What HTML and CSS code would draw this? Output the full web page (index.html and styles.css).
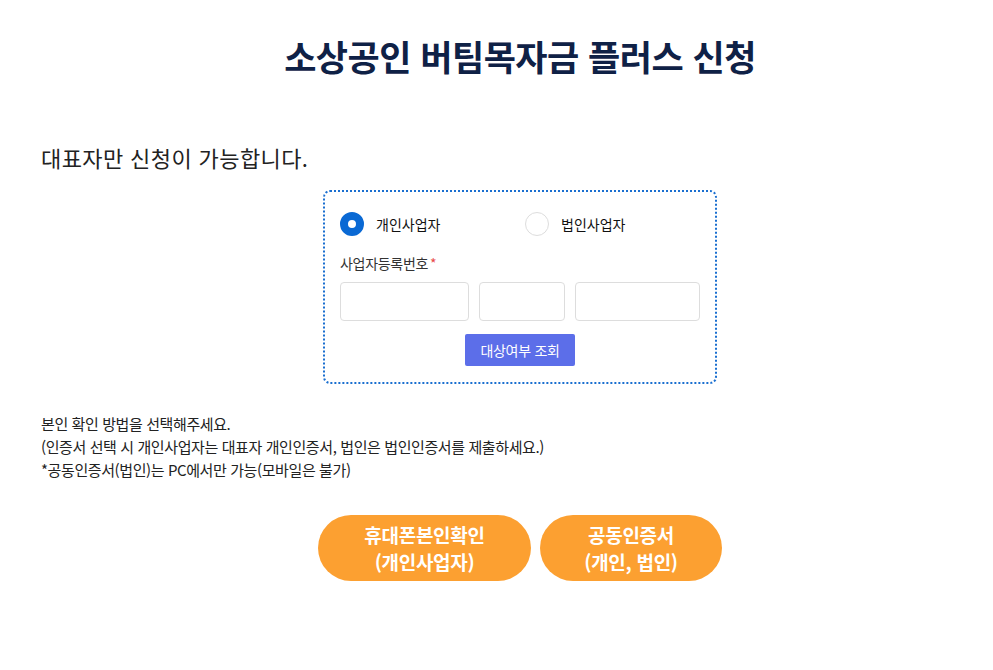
FILE: index.html
```html
<!DOCTYPE html>
<html lang="ko">
<head>
<meta charset="utf-8">
<title>소상공인 버팀목자금 플러스 신청</title>
<link rel="stylesheet" href="styles.css">
</head>
<body>
<div class="page">
  <h1 class="title">소상공인 버팀목자금 플러스 신청</h1>
  <p class="notice">대표자만 신청이 가능합니다.</p>
  <div class="card">
    <div class="radios">
      <label class="radio"><span class="dot checked"></span><span>개인사업자</span></label>
      <label class="radio"><span class="dot"></span><span>법인사업자</span></label>
    </div>
    <div class="field-label">사업자등록번호<span class="req">*</span></div>
    <div class="inputs">
      <input class="inp inp-a" type="text">
      <input class="inp inp-b" type="text">
      <input class="inp inp-c" type="text">
    </div>
    <div class="check-row"><button class="check-btn">대상여부 조회</button></div>
  </div>
  <div class="guide">
    <p>본인 확인 방법을 선택해주세요.</p>
    <p>(인증서 선택 시 개인사업자는 대표자 개인인증서, 법인은 법인인증서를 제출하세요.)</p>
    <p>*공동인증서(법인)는 PC에서만 가능(모바일은 불가)</p>
  </div>
  <div class="actions">
    <button class="pill pill-a">휴대폰본인확인<br>(개인사업자)</button>
    <button class="pill pill-b">공동인증서<br>(개인, 법인)</button>
  </div>
</div>
</body>
</html>
```
FILE: styles.css
```css
* { box-sizing: border-box; }
html, body { margin: 0; padding: 0; background: #fff; overflow: hidden; }
body {
  font-family: "Noto Sans CJK KR", "Noto Sans", sans-serif;
  color: #222;
}
.page {
  width: 958px;
  margin-left: 41px;
  padding-top: 28px;
}
.title {
  margin: 0;
  text-align: center;
  font-size: 35px;
  font-weight: 700;
  color: #0f2146;
  line-height: 56px;
  letter-spacing: -0.5px;
}
.notice {
  margin: 57px 0 0;
  font-size: 22px;
  line-height: 32px;
  color: #222;
  letter-spacing: 0.4px;
}
.card {
  width: 394px;
  margin: 17px auto 0;
  border: 2px dotted #1a6fd0;
  border-radius: 7px;
  padding: 17px 15px 16px;
}
.radios {
  display: flex;
  height: 30px;
  align-items: center;
}
.radio {
  display: flex;
  flex-shrink: 0;
  align-items: center;
  gap: 12px;
  font-size: 14px;
  color: #111;
  width: 185px;
}
.dot {
  width: 24px;
  height: 24px;
  border-radius: 50%;
  border: 1px solid #ddd;
  background: #fff;
}
.dot.checked {
  border: 8px solid #0a69d4;
}
.field-label {
  margin-top: 13px;
  font-size: 14px;
  color: #333;
  line-height: 22px;
  letter-spacing: -0.3px;
}
.req { color: #e84a4a; margin-left: 2px; }
.inputs {
  display: flex;
  gap: 10px;
  margin-top: 8px;
}
.inp {
  height: 39px;
  border: 1px solid #ddd;
  border-radius: 4px;
  background: #fff;
  padding: 0;
}
.inp-a { width: 129px; }
.inp-b { width: 86px; }
.inp-c { width: 125px; }
.check-row {
  display: flex;
  justify-content: center;
  margin-top: 13px;
}
.check-btn {
  width: 110px;
  height: 32px;
  border: 0;
  border-radius: 2px;
  background: #5c6ee9;
  color: #fff;
  font-family: inherit;
  font-size: 14px;
  letter-spacing: -0.3px;
}
.guide {
  margin-top: 28px;
  font-size: 15px;
  line-height: 23px;
  color: #222;
  letter-spacing: -0.4px;
}
.guide p { margin: 0; }
.actions {
  display: flex;
  justify-content: center;
  gap: 9px;
  margin-top: 34px;
}
.pill {
  height: 66px;
  border: 0;
  border-radius: 33px;
  background: #fca031;
  color: #fff;
  font-family: inherit;
  font-size: 19px;
  font-weight: 700;
  line-height: 27px;
  letter-spacing: -0.3px;
}
.pill-a { width: 213px; }
.pill-b { width: 182px; }
```
